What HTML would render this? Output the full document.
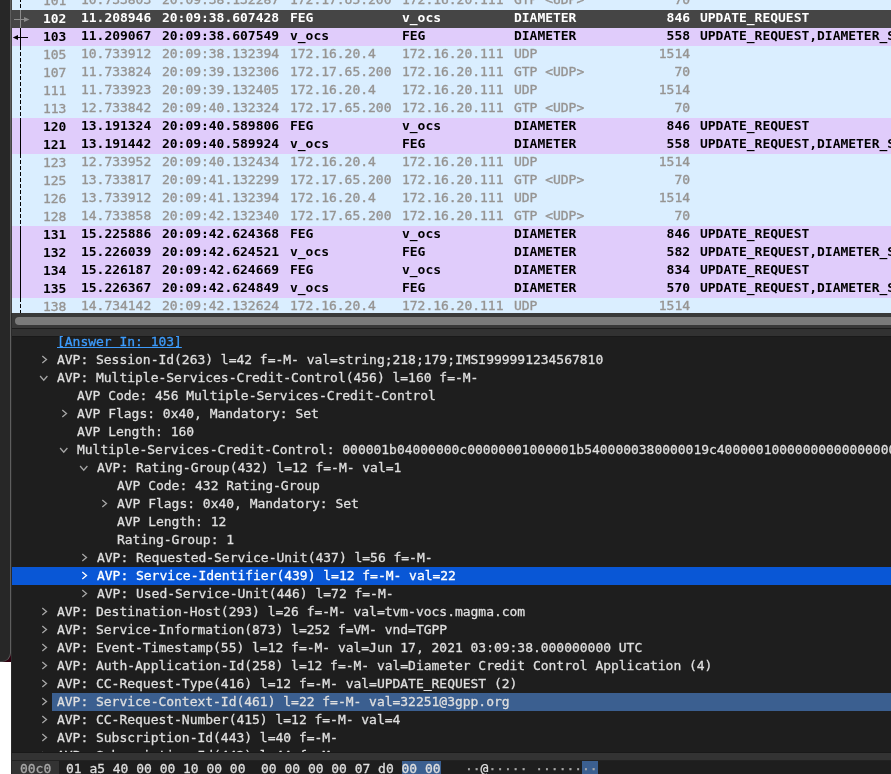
<!DOCTYPE html>
<html><head><meta charset="utf-8"><title>Wireshark</title>
<style>
html,body{margin:0;padding:0}
body{width:891px;height:774px;overflow:hidden;position:relative;background:#1e1e1e;
 font-family:"DejaVu Sans Mono","Liberation Mono",monospace;font-size:13px;line-height:18px;color:#dfdfdf;letter-spacing:-0.024px}
.abs{position:absolute}
#strip{left:0;top:0;width:10px;height:661px;background:#272727;border-right:1px solid #5e5e5e;border-bottom:1px solid #4a4a4a;border-bottom-right-radius:9px;z-index:5}
#maroon{left:0;top:648px;width:11px;height:14px;background:#30000f;z-index:4}
#white{left:0;top:662px;width:11px;height:112px;background:#fff;z-index:4}
#frame{left:11px;top:0;width:1px;height:313px;background:#444;z-index:3}
#frame2{left:11px;top:313px;width:1px;height:461px;background:#2a2a2a;z-index:3}
#list{left:12px;top:0;width:879px;height:313px;overflow:hidden;background:#daeeff}
.r{position:absolute;left:0;width:879px;height:18px;white-space:pre}
.r span{position:absolute;top:-1px}
.r .c1{top:0}
.u span{-webkit-text-stroke:0.35px}
.u{background:#daeeff;color:#969492}
.d{background:#e0ccfb;color:#000;font-weight:bold}
.s{background:#454545;color:#fff;font-weight:bold}
.c1{left:31px}.c2{left:69px}.c3{left:150px}.c4{left:278px}.c5{left:390px}.c6{left:502px}.c7{right:201px;text-align:right}.c8{left:688px}
.vl{position:absolute;left:8px;width:1px}
#sb{left:12px;top:313px;width:879px;height:15px;background:#393939}
#thumb{left:15px;top:317px;width:890px;height:8px;border-radius:4px;background:#7b7b7b}
#gap{left:12px;top:329px;width:879px;height:7px;background:#323232}
#tree{left:12px;top:336px;width:879px;height:416px;overflow:hidden;background:#1e1e1e;box-shadow:inset 0 1px 0 #191919}
.t{position:absolute;left:0;width:879px;height:18px;white-space:pre}
.t span{position:absolute;top:0;-webkit-text-stroke:0.3px}
.t .ar{color:#bdbdbd}
.lnk{color:#3d9bfb;text-decoration:underline;text-decoration-thickness:1px;text-decoration-skip-ink:none;text-underline-offset:1px}
.sel{background:#0957d6;color:#fff}
.hlb{position:absolute;top:0;height:18px;background:#3b5f90}
#hsep{left:12px;top:752px;width:879px;height:7px;background:#333;border-top:1px solid #191919;border-bottom:1px solid #222}
#hex{left:12px;top:761px;width:879px;height:13px;overflow:hidden;background:#1e1e1e;white-space:pre}
#hex span{position:absolute;top:-1px;-webkit-text-stroke:0.3px}
#list,#tree,#hex{will-change:transform}
#off{left:0;top:0;width:47px;height:14px;background:#333;color:#a9a9a9}
.hs{background:#3b5f90}
</style></head><body>
<div id="strip" class="abs"></div><div id="maroon" class="abs"></div><div id="white" class="abs"></div><div id="frame" class="abs"></div><div id="frame2" class="abs"></div>
<div id="list" class="abs">
<div class="r u" style="top:-8px"><span class="c1">101</span><span class="c2">10.733803</span><span class="c3">20:09:38.132287</span><span class="c4">172.17.65.200</span><span class="c5">172.16.20.111</span><span class="c6">GTP &lt;UDP&gt;</span><span class="c7">70</span><span class="c8"></span></div>
<div class="r s" style="top:10px"><span class="c1">102</span><span class="c2">11.208946</span><span class="c3">20:09:38.607428</span><span class="c4">FEG</span><span class="c5">v_ocs</span><span class="c6">DIAMETER</span><span class="c7">846</span><span class="c8">UPDATE_REQUEST</span></div>
<div class="r d" style="top:28px"><span class="c1">103</span><span class="c2">11.209067</span><span class="c3">20:09:38.607549</span><span class="c4">v_ocs</span><span class="c5">FEG</span><span class="c6">DIAMETER</span><span class="c7">558</span><span class="c8">UPDATE_REQUEST,DIAMETER_SUCCESS</span></div>
<div class="r u" style="top:46px"><span class="c1">105</span><span class="c2">10.733912</span><span class="c3">20:09:38.132394</span><span class="c4">172.16.20.4</span><span class="c5">172.16.20.111</span><span class="c6">UDP</span><span class="c7">1514</span><span class="c8"></span></div>
<div class="r u" style="top:64px"><span class="c1">107</span><span class="c2">11.733824</span><span class="c3">20:09:39.132306</span><span class="c4">172.17.65.200</span><span class="c5">172.16.20.111</span><span class="c6">GTP &lt;UDP&gt;</span><span class="c7">70</span><span class="c8"></span></div>
<div class="r u" style="top:82px"><span class="c1">111</span><span class="c2">11.733923</span><span class="c3">20:09:39.132405</span><span class="c4">172.16.20.4</span><span class="c5">172.16.20.111</span><span class="c6">UDP</span><span class="c7">1514</span><span class="c8"></span></div>
<div class="r u" style="top:100px"><span class="c1">113</span><span class="c2">12.733842</span><span class="c3">20:09:40.132324</span><span class="c4">172.17.65.200</span><span class="c5">172.16.20.111</span><span class="c6">GTP &lt;UDP&gt;</span><span class="c7">70</span><span class="c8"></span></div>
<div class="r d" style="top:118px"><span class="c1">120</span><span class="c2">13.191324</span><span class="c3">20:09:40.589806</span><span class="c4">FEG</span><span class="c5">v_ocs</span><span class="c6">DIAMETER</span><span class="c7">846</span><span class="c8">UPDATE_REQUEST</span></div>
<div class="r d" style="top:136px"><span class="c1">121</span><span class="c2">13.191442</span><span class="c3">20:09:40.589924</span><span class="c4">v_ocs</span><span class="c5">FEG</span><span class="c6">DIAMETER</span><span class="c7">558</span><span class="c8">UPDATE_REQUEST,DIAMETER_SUCCESS</span></div>
<div class="r u" style="top:154px"><span class="c1">123</span><span class="c2">12.733952</span><span class="c3">20:09:40.132434</span><span class="c4">172.16.20.4</span><span class="c5">172.16.20.111</span><span class="c6">UDP</span><span class="c7">1514</span><span class="c8"></span></div>
<div class="r u" style="top:172px"><span class="c1">125</span><span class="c2">13.733817</span><span class="c3">20:09:41.132299</span><span class="c4">172.17.65.200</span><span class="c5">172.16.20.111</span><span class="c6">GTP &lt;UDP&gt;</span><span class="c7">70</span><span class="c8"></span></div>
<div class="r u" style="top:190px"><span class="c1">126</span><span class="c2">13.733912</span><span class="c3">20:09:41.132394</span><span class="c4">172.16.20.4</span><span class="c5">172.16.20.111</span><span class="c6">UDP</span><span class="c7">1514</span><span class="c8"></span></div>
<div class="r u" style="top:208px"><span class="c1">128</span><span class="c2">14.733858</span><span class="c3">20:09:42.132340</span><span class="c4">172.17.65.200</span><span class="c5">172.16.20.111</span><span class="c6">GTP &lt;UDP&gt;</span><span class="c7">70</span><span class="c8"></span></div>
<div class="r d" style="top:226px"><span class="c1">131</span><span class="c2">15.225886</span><span class="c3">20:09:42.624368</span><span class="c4">FEG</span><span class="c5">v_ocs</span><span class="c6">DIAMETER</span><span class="c7">846</span><span class="c8">UPDATE_REQUEST</span></div>
<div class="r d" style="top:244px"><span class="c1">132</span><span class="c2">15.226039</span><span class="c3">20:09:42.624521</span><span class="c4">v_ocs</span><span class="c5">FEG</span><span class="c6">DIAMETER</span><span class="c7">582</span><span class="c8">UPDATE_REQUEST,DIAMETER_SUCCESS</span></div>
<div class="r d" style="top:262px"><span class="c1">134</span><span class="c2">15.226187</span><span class="c3">20:09:42.624669</span><span class="c4">FEG</span><span class="c5">v_ocs</span><span class="c6">DIAMETER</span><span class="c7">834</span><span class="c8">UPDATE_REQUEST</span></div>
<div class="r d" style="top:280px"><span class="c1">135</span><span class="c2">15.226367</span><span class="c3">20:09:42.624849</span><span class="c4">v_ocs</span><span class="c5">FEG</span><span class="c6">DIAMETER</span><span class="c7">570</span><span class="c8">UPDATE_REQUEST,DIAMETER_SUCCESS</span></div>
<div class="r u" style="top:298px"><span class="c1">138</span><span class="c2">14.734142</span><span class="c3">20:09:42.132624</span><span class="c4">172.16.20.4</span><span class="c5">172.16.20.111</span><span class="c6">UDP</span><span class="c7">1514</span><span class="c8"></span></div>
<div class="vl" style="top:-8px;height:18px;background:repeating-linear-gradient(to bottom,#000 0,#000 4px,transparent 4px,transparent 6px)"></div>
<div class="vl" style="top:10px;height:18px;background:#8c8c8c"></div>
<div class="vl" style="top:28px;height:18px;background:#000"></div>
<div class="vl" style="top:46px;height:72px;background:repeating-linear-gradient(to bottom,#000 0,#000 4px,transparent 4px,transparent 6px)"></div>
<div class="vl" style="top:118px;height:36px;background:#000"></div>
<div class="vl" style="top:154px;height:72px;background:repeating-linear-gradient(to bottom,#000 0,#000 4px,transparent 4px,transparent 6px)"></div>
<div class="vl" style="top:226px;height:72px;background:#000"></div>
<div class="vl" style="top:298px;height:18px;background:repeating-linear-gradient(to bottom,#000 0,#000 4px,transparent 4px,transparent 6px)"></div>
<svg class="abs" style="left:0;top:10px" width="24" height="36" viewBox="0 0 24 36"><path d="M2 9.5H13" stroke="#8c8c8c" stroke-width="1" fill="none"/><path d="M12 7L17.5 9.5L12 12Z" fill="#8c8c8c"/><path d="M5 27.5H16" stroke="#000" stroke-width="1" fill="none"/><path d="M6 25L0.8 27.5L6 30Z" fill="#000"/></svg>
</div>
<div id="sb" class="abs"></div><div id="thumb" class="abs"></div><div id="gap" class="abs"></div>
<div id="tree" class="abs">
<div class="t" style="top:-3px"><span class="lnk" style="left:45px">[Answer In: 103]</span></div>
<div class="t" style="top:15px"><svg class="abs" style="left:29px;top:4px" width="8" height="10" viewBox="0 0 8 10"><path d="M1.3 1.1L5.5 4.6L1.3 8.1" stroke="#a6a6a6" stroke-width="1.3" fill="none"/></svg><span style="left:45px">AVP: Session-Id(263) l=42 f=-M- val=string;218;179;IMSI999991234567810</span></div>
<div class="t" style="top:33px"><svg class="abs" style="left:27px;top:5px" width="10" height="8" viewBox="0 0 10 8"><path d="M1.1 2L4.75 6.2L8.4 2" stroke="#a6a6a6" stroke-width="1.3" fill="none"/></svg><span style="left:45px">AVP: Multiple-Services-Credit-Control(456) l=160 f=-M-</span></div>
<div class="t" style="top:51px"><span style="left:65px">AVP Code: 456 Multiple-Services-Credit-Control</span></div>
<div class="t" style="top:69px"><svg class="abs" style="left:49px;top:4px" width="8" height="10" viewBox="0 0 8 10"><path d="M1.3 1.1L5.5 4.6L1.3 8.1" stroke="#a6a6a6" stroke-width="1.3" fill="none"/></svg><span style="left:65px">AVP Flags: 0x40, Mandatory: Set</span></div>
<div class="t" style="top:87px"><span style="left:65px">AVP Length: 160</span></div>
<div class="t" style="top:105px"><svg class="abs" style="left:47px;top:5px" width="10" height="8" viewBox="0 0 10 8"><path d="M1.1 2L4.75 6.2L8.4 2" stroke="#a6a6a6" stroke-width="1.3" fill="none"/></svg><span style="left:65px">Multiple-Services-Credit-Control: 000001b04000000c00000001000001b5400000380000019c4000001000000000000000000000</span></div>
<div class="t" style="top:123px"><svg class="abs" style="left:67px;top:5px" width="10" height="8" viewBox="0 0 10 8"><path d="M1.1 2L4.75 6.2L8.4 2" stroke="#a6a6a6" stroke-width="1.3" fill="none"/></svg><span style="left:85px">AVP: Rating-Group(432) l=12 f=-M- val=1</span></div>
<div class="t" style="top:141px"><span style="left:105px">AVP Code: 432 Rating-Group</span></div>
<div class="t" style="top:159px"><svg class="abs" style="left:89px;top:4px" width="8" height="10" viewBox="0 0 8 10"><path d="M1.3 1.1L5.5 4.6L1.3 8.1" stroke="#a6a6a6" stroke-width="1.3" fill="none"/></svg><span style="left:105px">AVP Flags: 0x40, Mandatory: Set</span></div>
<div class="t" style="top:177px"><span style="left:105px">AVP Length: 12</span></div>
<div class="t" style="top:195px"><span style="left:105px">Rating-Group: 1</span></div>
<div class="t" style="top:213px"><svg class="abs" style="left:69px;top:4px" width="8" height="10" viewBox="0 0 8 10"><path d="M1.3 1.1L5.5 4.6L1.3 8.1" stroke="#a6a6a6" stroke-width="1.3" fill="none"/></svg><span style="left:85px">AVP: Requested-Service-Unit(437) l=56 f=-M-</span></div>
<div class="t sel" style="top:231px"><svg class="abs" style="left:69px;top:4px" width="8" height="10" viewBox="0 0 8 10"><path d="M1.3 1.1L5.5 4.6L1.3 8.1" stroke="#fff" stroke-width="1.3" fill="none"/></svg><span style="left:85px">AVP: Service-Identifier(439) l=12 f=-M- val=22</span></div>
<div class="t" style="top:249px"><svg class="abs" style="left:69px;top:4px" width="8" height="10" viewBox="0 0 8 10"><path d="M1.3 1.1L5.5 4.6L1.3 8.1" stroke="#a6a6a6" stroke-width="1.3" fill="none"/></svg><span style="left:85px">AVP: Used-Service-Unit(446) l=72 f=-M-</span></div>
<div class="t" style="top:267px"><svg class="abs" style="left:29px;top:4px" width="8" height="10" viewBox="0 0 8 10"><path d="M1.3 1.1L5.5 4.6L1.3 8.1" stroke="#a6a6a6" stroke-width="1.3" fill="none"/></svg><span style="left:45px">AVP: Destination-Host(293) l=26 f=-M- val=tvm-vocs.magma.com</span></div>
<div class="t" style="top:285px"><svg class="abs" style="left:29px;top:4px" width="8" height="10" viewBox="0 0 8 10"><path d="M1.3 1.1L5.5 4.6L1.3 8.1" stroke="#a6a6a6" stroke-width="1.3" fill="none"/></svg><span style="left:45px">AVP: Service-Information(873) l=252 f=VM- vnd=TGPP</span></div>
<div class="t" style="top:303px"><svg class="abs" style="left:29px;top:4px" width="8" height="10" viewBox="0 0 8 10"><path d="M1.3 1.1L5.5 4.6L1.3 8.1" stroke="#a6a6a6" stroke-width="1.3" fill="none"/></svg><span style="left:45px">AVP: Event-Timestamp(55) l=12 f=-M- val=Jun 17, 2021 03:09:38.000000000 UTC</span></div>
<div class="t" style="top:321px"><svg class="abs" style="left:29px;top:4px" width="8" height="10" viewBox="0 0 8 10"><path d="M1.3 1.1L5.5 4.6L1.3 8.1" stroke="#a6a6a6" stroke-width="1.3" fill="none"/></svg><span style="left:45px">AVP: Auth-Application-Id(258) l=12 f=-M- val=Diameter Credit Control Application (4)</span></div>
<div class="t" style="top:339px"><svg class="abs" style="left:29px;top:4px" width="8" height="10" viewBox="0 0 8 10"><path d="M1.3 1.1L5.5 4.6L1.3 8.1" stroke="#a6a6a6" stroke-width="1.3" fill="none"/></svg><span style="left:45px">AVP: CC-Request-Type(416) l=12 f=-M- val=UPDATE_REQUEST (2)</span></div>
<div class="t" style="top:357px"><div class="hlb" style="left:40px;right:0"></div><svg class="abs" style="left:29px;top:4px" width="8" height="10" viewBox="0 0 8 10"><path d="M1.3 1.1L5.5 4.6L1.3 8.1" stroke="#a6a6a6" stroke-width="1.3" fill="none"/></svg><span style="left:45px">AVP: Service-Context-Id(461) l=22 f=-M- val=32251@3gpp.org</span></div>
<div class="t" style="top:375px"><svg class="abs" style="left:29px;top:4px" width="8" height="10" viewBox="0 0 8 10"><path d="M1.3 1.1L5.5 4.6L1.3 8.1" stroke="#a6a6a6" stroke-width="1.3" fill="none"/></svg><span style="left:45px">AVP: CC-Request-Number(415) l=12 f=-M- val=4</span></div>
<div class="t" style="top:393px"><svg class="abs" style="left:29px;top:4px" width="8" height="10" viewBox="0 0 8 10"><path d="M1.3 1.1L5.5 4.6L1.3 8.1" stroke="#a6a6a6" stroke-width="1.3" fill="none"/></svg><span style="left:45px">AVP: Subscription-Id(443) l=40 f=-M-</span></div>
<div class="t" style="top:411px"><svg class="abs" style="left:29px;top:4px" width="8" height="10" viewBox="0 0 8 10"><path d="M1.3 1.1L5.5 4.6L1.3 8.1" stroke="#a6a6a6" stroke-width="1.3" fill="none"/></svg><span style="left:45px">AVP: Subscription-Id(443) l=44 f=-M-</span></div>
</div>
<div id="hsep" class="abs"></div>
<div id="hex" class="abs"><div id="off" class="abs"><span style="left:8px">00c0</span></div><span style="left:54px">01 a5 40 00 00 10 00 00  00 00 00 00 07 d0 <span class="hs" style="position:static">00 00</span></span><span style="left:453px;color:#a9a9a9">··<span style="position:static;color:#dfdfdf">@</span>····· ······<span class="hs" style="position:static">··</span></span></div>
</body></html>
